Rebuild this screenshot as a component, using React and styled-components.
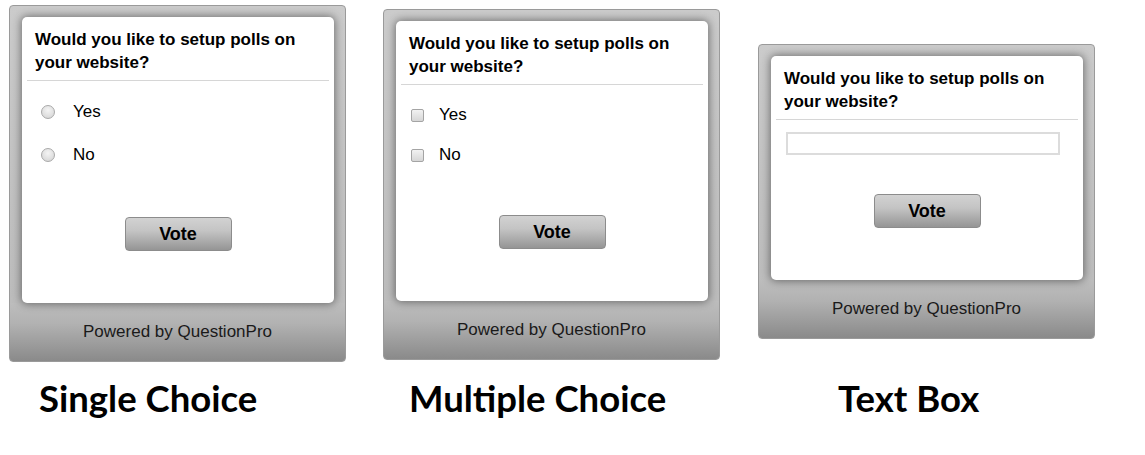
import React from "react";
import styled, { createGlobalStyle } from "styled-components";

const GlobalStyle = createGlobalStyle`
  body {
    margin: 0;
    background: #fff;
    font-family: "Liberation Sans", Arial, sans-serif;
  }
`;

const polls = [
  { kind: "radio", top: 5, label: "Single Choice", labelLeft: 30, rowHeight: 43 },
  { kind: "checkbox", top: 9, label: "Multiple Choice", labelLeft: 26, rowHeight: 40 },
  { kind: "text", top: 44, label: "Text Box", labelLeft: 80 },
];

const Poll = ({ kind, rowHeight }) => (
  <Frame>
    <Card>
      <Question>Would you like to setup polls on your website?</Question>
      {kind === "text" ? (
        <TextField type="text" />
      ) : (
        <Options $kind={kind}>
          {["Yes", "No"].map(opt => (
            <Option key={opt} $height={rowHeight} $kind={kind}>
              {kind === "radio" ? <Radio /> : <Check />}
              <span>{opt}</span>
            </Option>
          ))}
        </Options>
      )}
      <VoteButton $kind={kind}>Vote</VoteButton>
    </Card>
    <Footer>Powered by QuestionPro</Footer>
  </Frame>
);

const App = () => (
  <>
    <GlobalStyle />
    <Page>
      <Columns>
        {polls.map(p => (
          <Column key={p.label} $top={p.top}>
            <Poll kind={p.kind} rowHeight={p.rowHeight} />
          </Column>
        ))}
      </Columns>
      <Columns>
        {polls.map(p => (
          <Caption key={p.label} $left={p.labelLeft}>
            {p.label}
          </Caption>
        ))}
      </Columns>
    </Page>
  </>
);

const Page = styled.div`
  width: 1145px;
  height: 455px;
  padding-left: 9px;
  box-sizing: border-box;
  overflow: hidden;
`;

const Columns = styled.div`
  display: grid;
  grid-template-columns: 374px 375px 374px;
  align-items: start;
`;

const Column = styled.div`
  padding-top: ${p => p.$top}px;
`;

const Frame = styled.div`
  width: 337px;
  box-sizing: border-box;
  border: 1px solid #9a9a9a;
  border-radius: 4px;
  padding: 11px 11px 0 12px;
  background: linear-gradient(to bottom, #cbcbcb 0%, #c0c0c0 60%, #b9b9b9 100%);
  overflow: hidden;
`;

const Card = styled.div`
  position: relative;
  z-index: 1;
  background: #fff;
  border-radius: 5px;
  box-shadow: 0 0 9px 1px rgba(0, 0, 0, 0.45);
  padding: 0 5px 52px;
  display: flex;
  flex-direction: column;
`;

const Question = styled.div`
  padding: 11px 20px 6px 8px;
  border-bottom: 1px solid #d6d6d6;
  font-size: 17px;
  font-weight: bold;
  line-height: 23px;
  color: #000;
`;

const Options = styled.div`
  padding-top: ${p => (p.$kind === "radio" ? 9 : 10)}px;
`;

const Option = styled.div`
  height: ${p => p.$height}px;
  display: flex;
  align-items: center;
  padding-left: ${p => (p.$kind === "radio" ? 14 : 10)}px;
  gap: ${p => (p.$kind === "radio" ? 18 : 15)}px;
  font-size: 17px;
  color: #000;
`;

const Radio = styled.span`
  width: 12px;
  height: 12px;
  border-radius: 50%;
  border: 1px solid #a9a9a9;
  background: radial-gradient(circle at 50% 35%, #f4f4f4 0%, #dcdcdc 70%, #cfcfcf 100%);
`;

const Check = styled.span`
  width: 11px;
  height: 11px;
  border-radius: 2px;
  border: 1px solid #a4a4a4;
  background: linear-gradient(to bottom, #f2f2f2, #d6d6d6);
`;

const TextField = styled.input`
  margin: 12px 0 0 10px;
  width: 274px;
  height: 23px;
  box-sizing: border-box;
  border: 2px solid #dcdcdc;
  outline: none;
`;

const VoteButton = styled.button`
  align-self: center;
  margin-top: ${p => ({ radio: 41, checkbox: 40, text: 39 })[p.$kind]}px;
  width: 107px;
  height: 34px;
  border: 1px solid #8c8c8c;
  border-radius: 4px;
  background: linear-gradient(to bottom, #d2d2d2 0%, #c4c4c4 40%, #959595 100%);
  font-family: "Liberation Sans", Arial, sans-serif;
  font-size: 18px;
  font-weight: bold;
  color: #000;
  padding: 0;
`;

const Footer = styled.div`
  margin: 0 -11px 0 -12px;
  padding: 19px 0 19px;
  line-height: 20px;
  text-align: center;
  font-size: 17px;
  color: #1a1a1a;
  background: linear-gradient(to bottom, #bdbdbd 0%, #b2b2b2 35%, #8a8a8a 100%);
`;

const Caption = styled.div`
  padding-left: ${p => p.$left}px;
  padding-top: 14px;
  font-family: Lato, "Open Sans", sans-serif;
  font-weight: bold;
  font-size: 36.5px;
  color: #000;
`;

export default App;
